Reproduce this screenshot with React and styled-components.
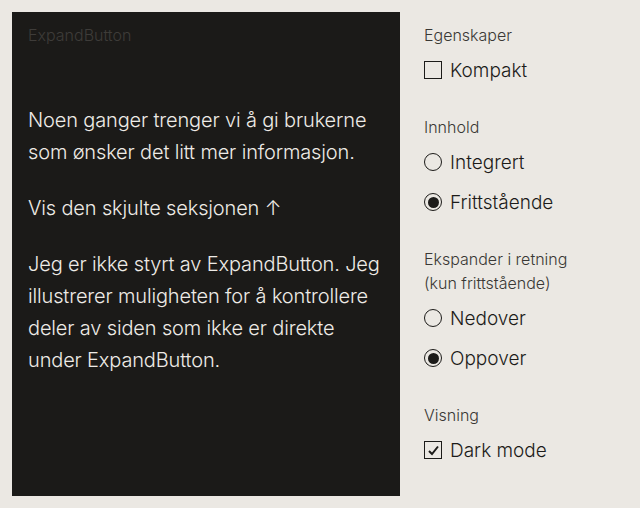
import React, { useState } from "react";
import styled, { createGlobalStyle } from "styled-components";

const Global = createGlobalStyle`
  html, body { margin: 0; padding: 0; background: #ebe8e3; }
  body { font-family: Inter, "Noto Sans", sans-serif; color: #1c1b19; }
`;

const Page = styled.div`
  display: flex;
  gap: 24px;
  padding: 12px;
  width: 640px;
  height: 508px;
  box-sizing: border-box;
`;

const Preview = styled.div`
  width: 388px;
  height: 484px;
  flex-shrink: 0;
  box-sizing: border-box;
  background: #1b1a18;
  padding: 11px 14px 11px 16px;
  display: flex;
  flex-direction: column;
`;

const PreviewTitle = styled.div`
  font-size: 16px;
  line-height: 24px;
  font-weight: 300;
  color: #3e3c39;
  margin-bottom: 57px;
`;

const Body = styled.p`
  margin: 0 0 24px;
  font-size: 20px;
  line-height: 32px;
  font-weight: 300;
  letter-spacing: -0.15px;
  color: #eeebe6;
`;

const Controls = styled.div`
  display: flex;
  flex-direction: column;
  padding-top: 11px;
  width: 200px;
`;

const Group = styled.fieldset`
  border: 0;
  margin: 0 0 33px;
  padding: 0;
  display: flex;
  flex-direction: column;
`;

const Legend = styled.div`
  font-size: 16px;
  line-height: 24px;
  font-weight: 300;
  color: #3a3835;
  margin-bottom: 11px;
`;

const Option = styled.label`
  display: flex;
  align-items: center;
  gap: 8px;
  height: 24px;
  margin-bottom: 16px;
  font-size: 19px;
  font-weight: 300;
  color: #1c1b19;
  cursor: pointer;
  &:last-child { margin-bottom: 0; }
`;

const Box = styled.span`
  width: 18px;
  height: 18px;
  box-sizing: border-box;
  border: 1.5px solid #1c1b19;
  display: flex;
  align-items: center;
  justify-content: center;
`;

const Radio = styled.span`
  width: 18px;
  height: 18px;
  box-sizing: border-box;
  border: 1.5px solid #1c1b19;
  border-radius: 50%;
  display: flex;
  align-items: center;
  justify-content: center;
  &::after {
    content: "";
    width: 11px;
    height: 11px;
    border-radius: 50%;
    background: #1c1b19;
    display: ${(p) => (p.$on ? "block" : "none")};
  }
`;

function Check({ on, label, onClick }) {
  return (
    <Option onClick={onClick}>
      <Box>
        {on && (
          <svg width="13" height="13" viewBox="0 0 13 13">
            <path d="M2 7 L5 10 L11 2.5" fill="none" stroke="#1c1b19" strokeWidth="2" />
          </svg>
        )}
      </Box>
      {label}
    </Option>
  );
}

function RadioOpt({ on, label, onClick }) {
  return (
    <Option onClick={onClick}>
      <Radio $on={on} />
      {label}
    </Option>
  );
}

export default function App() {
  const [compact, setCompact] = useState(false);
  const [content, setContent] = useState("fri");
  const [dir, setDir] = useState("opp");
  const [dark, setDark] = useState(true);
  return (
    <>
      <Global />
      <Page>
        <Preview>
          <PreviewTitle>ExpandButton</PreviewTitle>
          <Body>Noen ganger trenger vi å gi brukerne som ønsker det litt mer informasjon.</Body>
          <Body>Vis den skjulte seksjonen ↑</Body>
          <Body>
            Jeg er ikke styrt av ExpandButton. Jeg illustrerer muligheten for å kontrollere deler av siden som ikke er direkte under ExpandButton.
          </Body>
        </Preview>
        <Controls>
          <Group>
            <Legend>Egenskaper</Legend>
            <Check on={compact} label="Kompakt" onClick={() => setCompact(!compact)} />
          </Group>
          <Group>
            <Legend>Innhold</Legend>
            <RadioOpt on={content === "int"} label="Integrert" onClick={() => setContent("int")} />
            <RadioOpt on={content === "fri"} label="Frittstående" onClick={() => setContent("fri")} />
          </Group>
          <Group>
            <Legend>
              Ekspander i retning
              <br />
              (kun frittstående)
            </Legend>
            <RadioOpt on={dir === "ned"} label="Nedover" onClick={() => setDir("ned")} />
            <RadioOpt on={dir === "opp"} label="Oppover" onClick={() => setDir("opp")} />
          </Group>
          <Group>
            <Legend>Visning</Legend>
            <Check on={dark} label="Dark mode" onClick={() => setDark(!dark)} />
          </Group>
        </Controls>
      </Page>
    </>
  );
}
